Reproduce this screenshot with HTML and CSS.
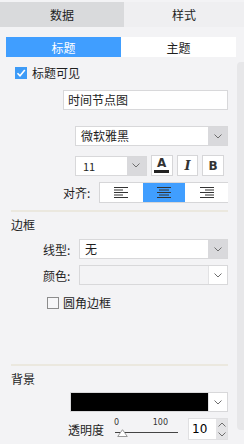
FILE: index.html
```html
<!DOCTYPE html>
<html>
  <head>
    <meta charset="utf-8" />
    <title>样式</title>
    <link rel="stylesheet" href="styles.css">
  </head>
  <body>
    <div class="tabs">
      <div class="tab tab-active">数据</div>
      <div class="tab">样式</div>
    </div>

    <div class="sub-tabs">
      <div class="sub-tab sub-tab-active">标题</div>
      <div class="sub-tab">主题</div>
    </div>

    <div class="content">
      <label class="check-row check-title">
        <span class="checkbox checkbox-on">
          <svg viewBox="0 0 12 12"><polyline points="2.5,6.2 5,8.7 9.8,3" /></svg>
        </span>
        标题可见
      </label>

      <div class="field input-title">时间节点图</div>

      <div class="select select-font">
        <span class="select-value">微软雅黑</span>
        <span class="select-arrow arrow-gray">
          <svg viewBox="0 0 8 5"><polyline points="0.5,0.5 4,4 7.5,0.5" /></svg>
        </span>
      </div>

      <div class="font-row">
        <div class="select select-size">
          <span class="select-value">11</span>
          <span class="select-arrow arrow-gray">
            <svg viewBox="0 0 8 5"><polyline points="0.5,0.5 4,4 7.5,0.5" /></svg>
          </span>
        </div>
        <div class="font-btn">
          <span class="glyph-a">A</span>
          <span class="glyph-bar"></span>
        </div>
        <div class="font-btn glyph-i">I</div>
        <div class="font-btn glyph-b">B</div>
      </div>

      <div class="align-row">
        <span class="align-label">对齐:</span>
        <div class="align-group">
          <div class="align-btn">
            <svg viewBox="0 0 14 11"><path d="M0 0.5h14M0 3h9M0 5.5h14M0 8h9M0 10.5h14" /></svg>
          </div>
          <div class="align-btn align-active">
            <svg viewBox="0 0 14 11"><path d="M0 0.5h14M2 3h10M0 5.5h14M2 8h10M0 10.5h14" /></svg>
          </div>
          <div class="align-btn">
            <svg viewBox="0 0 14 11"><path d="M0 0.5h14M5 3h9M0 5.5h14M5 8h9M0 10.5h14" /></svg>
          </div>
        </div>
      </div>

      <div class="divider"></div>

      <div class="section-title">边框</div>

      <div class="form-row row-line">
        <span class="form-label">线型:</span>
        <div class="select select-wide">
          <span class="select-value">无</span>
          <span class="select-arrow arrow-gray">
            <svg viewBox="0 0 8 5"><polyline points="0.5,0.5 4,4 7.5,0.5" /></svg>
          </span>
        </div>
      </div>

      <div class="form-row row-color">
        <span class="form-label">颜色:</span>
        <div class="select select-wide select-disabled">
          <span class="select-value"></span>
          <span class="select-arrow arrow-white">
            <svg viewBox="0 0 8 5"><polyline points="0.5,0.5 4,4 7.5,0.5" /></svg>
          </span>
        </div>
      </div>

      <label class="check-row check-round">
        <span class="checkbox"></span>
        圆角边框
      </label>

      <div class="divider divider-low"></div>

      <div class="section-title">背景</div>

      <div class="select select-bg">
        <span class="select-value swatch"></span>
        <span class="select-arrow arrow-white">
          <svg viewBox="0 0 8 5"><polyline points="0.5,0.5 4,4 7.5,0.5" /></svg>
        </span>
      </div>

      <div class="opacity-row">
        <span class="opacity-label">透明度</span>
        <div class="slider">
          <div class="slider-scale">
            <span>0</span>
            <span>100</span>
          </div>
          <div class="slider-track"></div>
          <svg class="slider-thumb" viewBox="0 0 11 8"><polygon points="5.5,0.7 10.3,7.5 0.7,7.5" /></svg>
        </div>
        <div class="number">
          <span class="number-value">10</span>
          <span class="number-spin">
            <svg viewBox="0 0 8 5"><polyline points="0.5,4.5 4,1 7.5,4.5" /></svg>
            <svg viewBox="0 0 8 5"><polyline points="0.5,0.5 4,4 7.5,0.5" /></svg>
          </span>
        </div>
      </div>
    </div>

    <div class="scrollbar"></div>
  </body>
</html>
```

FILE: styles.css
```css
* {
  margin: 0;
  padding: 0;
  box-sizing: border-box;
}
body {
  width: 244px;
  height: 444px;
  overflow: hidden;
  position: relative;
  background: #f3f3f5;
  font-family: "Noto Sans CJK SC", "DejaVu Sans", sans-serif;
  font-size: 12px;
  color: #1e1e1e;
}
svg {
  display: block;
}
.tabs {
  display: flex;
  height: 27px;
  border-top: 2px solid #f3f3f5;
}
.tab {
  flex: 1;
  display: flex;
  align-items: center;
  justify-content: center;
  background: #efeff1;
  font-size: 12px;
}
.tab-active {
  flex: 0 0 124px;
  background: #d9dadc;
}
.sub-tabs {
  display: flex;
  height: 20px;
  margin: 10px 8px 0 6px;
  background: #fff;
}
.sub-tab {
  flex: 1;
  display: flex;
  align-items: center;
  justify-content: center;
}
.sub-tab-active {
  background: #409eff;
  color: #fff;
}
.content {
  padding: 0 16px 0 11px;
}
.check-row {
  display: flex;
  align-items: center;
  height: 12px;
  gap: 5px;
  line-height: 12px;
}
.check-title {
  margin: 10px 0 0 4px;
}
.check-round {
  margin: 12px 0 0 36px;
  gap: 4px;
}
.checkbox {
  width: 12px;
  height: 12px;
  border: 1px solid #8c8c8c;
  background: #f6f6f8;
}
.checkbox-on {
  border: none;
  background: #3d9bf7;
}
.checkbox-on svg {
  width: 12px;
  height: 12px;
  fill: none;
  stroke: #fff;
  stroke-width: 1.6;
}
.field {
  height: 20px;
  background: #fff;
  border: 1px solid #d8d8da;
  padding-left: 4px;
  line-height: 18px;
}
.input-title {
  margin: 11px 0 0 52px;
}
.select {
  display: flex;
  height: 20px;
  background: #fff;
  border: 1px solid #d8d8da;
}
.select-value {
  flex: 1;
  padding-left: 5px;
  line-height: 18px;
}
.select-arrow {
  flex: 0 0 19px;
  display: flex;
  align-items: center;
  justify-content: center;
}
.select-arrow svg,
.number-spin svg {
  width: 8px;
  height: 5px;
  fill: none;
  stroke: #6e6e6e;
  stroke-width: 1;
}
.arrow-gray {
  background: #d9d9dc;
}
.arrow-white {
  background: #fff;
  border-left: 1px solid #e2e2e4;
}
.select-font {
  margin: 16px 0 0 64px;
}
.font-row {
  display: flex;
  align-items: center;
  margin: 9px 0 0 64px;
  height: 21px;
}
.select-size {
  width: 73px;
  margin-right: 4px;
}
.select-size .select-value {
  padding-left: 7px;
  font-size: 11px;
}
.font-btn {
  width: 22px;
  height: 21px;
  margin-right: 4px;
  background: #fff;
  border: 1px solid #d6d6d8;
  display: flex;
  flex-direction: column;
  align-items: center;
  justify-content: center;
  font-family: "DejaVu Sans", sans-serif;
  font-weight: bold;
  color: #333;
}
.glyph-a {
  font-size: 12px;
  line-height: 11px;
}
.glyph-bar {
  width: 15px;
  height: 3px;
  margin-top: 1px;
  background: #222;
}
.glyph-i {
  font-family: "DejaVu Serif", serif;
  font-style: italic;
  font-size: 13px;
}
.glyph-b {
  font-size: 12px;
}
.align-row {
  display: flex;
  align-items: center;
  margin-top: 6px;
  height: 21px;
}
.align-label {
  width: 88px;
  padding-left: 52px;
}
.align-group {
  flex: 1;
  display: flex;
  height: 21px;
  background: #fff;
  border: 1px solid #d6d6d8;
  border-right: none;
}
.align-btn {
  flex: 1;
  display: flex;
  align-items: center;
  justify-content: center;
}
.align-btn svg {
  width: 14px;
  height: 11px;
  stroke: #333;
  stroke-width: 1;
}
.align-active {
  background: #409eff;
}
.divider {
  height: 2px;
  margin-top: 7px;
  background: #ebe8df;
}
.divider-low {
  margin-top: 55px;
}
.section-title {
  margin-top: 6px;
  line-height: 14px;
}
.form-row {
  display: flex;
  align-items: center;
}
.row-line {
  margin-top: 7px;
}
.row-color {
  margin-top: 6px;
}
.form-label {
  width: 68px;
  padding-left: 32px;
}
.select-wide {
  flex: 1;
}
.select-disabled {
  background: #f3f3f5;
}
.select-bg {
  margin: 6px 0 0 59px;
}
.swatch {
  background: #000;
}
.opacity-row {
  display: flex;
  align-items: center;
  margin: 6px 0 0 57px;
  height: 22px;
}
.opacity-label {
  width: 45px;
  font-size: 12px;
}
.slider {
  position: relative;
  width: 66px;
  height: 22px;
  margin-right: 9px;
}
.slider-scale {
  display: flex;
  justify-content: space-between;
  padding: 0 11px 0 1px;
  font-family: "DejaVu Sans", sans-serif;
  font-size: 8px;
  line-height: 9px;
  color: #333;
}
.slider-track {
  height: 1px;
  margin: 5px 1px 0 2px;
  background: #444;
}
.slider-thumb {
  position: absolute;
  left: 4px;
  top: 11px;
  width: 11px;
  height: 8px;
  fill: #fff;
  stroke: #999;
  stroke-width: 1;
}
.number {
  flex: 1;
  display: flex;
  height: 22px;
  background: #fff;
  border: 1px solid #e0e0e2;
}
.number-value {
  flex: 1;
  padding-left: 3px;
  font-family: "DejaVu Sans", sans-serif;
  font-size: 12px;
  line-height: 20px;
  color: #000;
}
.number-spin {
  flex: 0 0 11px;
  display: flex;
  flex-direction: column;
  align-items: center;
  justify-content: space-around;
  background: #e4e4e6;
}
.scrollbar {
  position: absolute;
  right: 0;
  top: 62px;
  width: 7px;
  height: 368px;
  background: #e7e7e9;
  border-radius: 4px 0 0 4px;
}
```
